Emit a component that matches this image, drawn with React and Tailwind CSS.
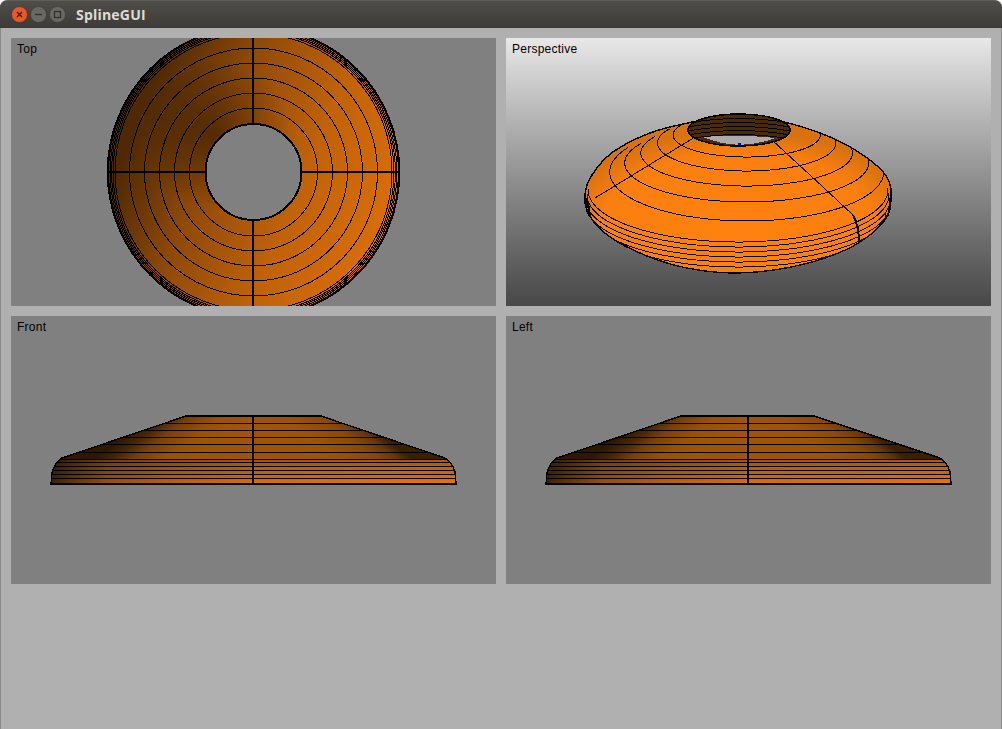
import React from "react";

// Small helper for the wireframe rings: builds an elliptical arc as a polyline
const arc = (cx, cy, rx, ry, from, to) => {
  const pts = [];
  for (let a = from; a <= to; a += 3) {
    const t = (a * Math.PI) / 180;
    pts.push(`${(cx + rx * Math.cos(t)).toFixed(1)},${(cy + ry * Math.sin(t)).toFixed(1)}`);
  }
  return "M" + pts.join(" L");
};

// Closed catmull-rom curve through the silhouette points
const smooth = (p) => {
  const n = p.length;
  let d = `M${p[0][0]} ${p[0][1]}`;
  for (let i = 0; i < n; i++) {
    const [a, b, c, e] = [p[(i - 1 + n) % n], p[i], p[(i + 1) % n], p[(i + 2) % n]];
    d += ` C${b[0] + (c[0] - a[0]) / 6} ${b[1] + (c[1] - a[1]) / 6} ${c[0] - (e[0] - b[0]) / 6} ${c[1] - (e[1] - b[1]) / 6} ${c[0]} ${c[1]}`;
  }
  return d + " Z";
};

const Panel = ({ label, className = "bg-[#808080]", children }) => (
  <div className={`relative w-[485px] h-[268px] overflow-hidden ${className}`}>
    {children}
    <span className="absolute left-[6px] top-[4px] text-[12px] leading-[15px] tracking-[0.25px] text-black font-['Liberation_Sans',sans-serif]">
      {label}
    </span>
  </div>
);

const TopView = () => (
  <svg viewBox="11 38 485 268" width="485" height="268" className="block" shapeRendering="crispEdges">
    <defs>
      <linearGradient id="topFill" gradientUnits="userSpaceOnUse" x1="130" y1="140" x2="368" y2="238">
        <stop offset="0" stopColor="#4f2905" />
        <stop offset="0.32" stopColor="#8f4a08" />
        <stop offset="0.68" stopColor="#c06208" />
        <stop offset="1" stopColor="#d66c0a" />
      </linearGradient>
      <radialGradient id="topDark" gradientUnits="userSpaceOnUse" cx="215" cy="135" r="75">
        <stop offset="0" stopColor="#000" stopOpacity="0.4" />
        <stop offset="1" stopColor="#000" stopOpacity="0" />
      </radialGradient>
    </defs>
    <circle cx="253.5" cy="172" r="146" fill="url(#topFill)" stroke="#000" strokeWidth="1.5" />
    <circle cx="215" cy="135" r="75" fill="url(#topDark)" />
    {[64, 79, 94, 109, 124, 138.5, 140.5, 142, 143.5, 145].map((r) => (
      <circle key={r} cx="253.5" cy="172" r={r} fill="none" stroke="#000" strokeWidth="1" />
    ))}
    <rect x="108" y="171" width="292" height="2" fill="#000" />
    <rect x="252" y="38" width="2" height="268" fill="#000" />
    <circle cx="253.5" cy="172" r="48" fill="#808080" stroke="#000" strokeWidth="2" />
  </svg>
);

const BODY = smooth([
  [688, 123],
  [650, 133],
  [613, 152],
  [592, 175],
  [585, 195],
  [589, 215],
  [610, 237],
  [647, 256],
  [687, 268],
  [733, 273],
  [780, 269],
  [825, 258],
  [860, 242],
  [885, 220],
  [891, 200],
  [887, 177],
  [863, 155],
  [830, 137],
  [788, 123],
  [739, 114],
]);

const PerspectiveView = () => (
  <svg viewBox="506 38 485 268" width="485" height="268" className="block" shapeRendering="crispEdges">
    <defs>
      <radialGradient id="bodyFill" gradientUnits="userSpaceOnUse" cx="738" cy="222" r="175" gradientTransform="translate(0 105) scale(1 0.55)">
        <stop offset="0" stopColor="#ff8210" />
        <stop offset="0.78" stopColor="#fb7f0f" />
        <stop offset="1" stopColor="#d8720f" />
      </radialGradient>
      <clipPath id="bodyClip">
        <path d={BODY} />
      </clipPath>
      <clipPath id="holeClip">
        <ellipse cx="739" cy="130" rx="51" ry="16" />
      </clipPath>
    </defs>
    <path d={BODY} fill="url(#bodyFill)" />
    <g clipPath="url(#bodyClip)" fill="none" stroke="#000" strokeWidth="1">
      {[
        [135, 73.7, 22],
        [143, 89.3, 28],
        [153, 105.8, 33],
        [163, 122, 39],
        [172, 137, 49],
      ].map(([cy, rx, ry]) => (
        <path key={cy} d={arc(746.7, cy, rx, ry, -30, 210)} />
      ))}
      {[
        [190, 150],
        [195, 151],
        [200, 152],
        [205, 152],
        [210, 151],
        [215, 148],
      ].map(([cy, rx]) => (
        <path key={cy} d={arc(738, cy, rx, 52, -2, 182)} />
      ))}
      <path d="M695 137 L595 198" />
      <path d="M772 140 L823 187 L853 215" />
      <path d="M853 215 Q859 226 859 242" strokeWidth="2" />
      <path d="M587 198 Q589 208 590 216" strokeWidth="2" />
    </g>
    <path d={BODY} fill="none" stroke="#000" strokeWidth="1.4" />
    <ellipse cx="739" cy="130" rx="51" ry="16" fill="#4a2a08" stroke="#000" strokeWidth="1.5" />
    <g clipPath="url(#holeClip)" fill="none" stroke="#000" strokeWidth="1">
      {[119, 123, 127, 131, 135].map((y) => (
        <path key={y} d={`M688 ${y + 4} Q739 ${y - 5} 790 ${y + 4}`} />
      ))}
    </g>
    <path d="M703 137 Q739 134 775 138 Q739 152 703 137 Z" fill="#ababab" />
    <path d="M738 143h3v2h-3z" fill="#0000e0" />
  </svg>
);

// Front and left views are the same profile, only shifted
const ProfileView = ({ id, originX, right }) => {
  const shape = `M186 416 L${right} 416 L445 458 Q452 462 455 472 L456 483 L456 484 L51 484 L52 473 Q55 462 62 458 Z`;
  return (
    <svg viewBox={`${originX} 316 485 268`} width="485" height="268" className="block" shapeRendering="crispEdges">
      <defs>
        <linearGradient id={`${id}UpperL`} gradientUnits="userSpaceOnUse" x1="124" y1="437" x2="160" y2="485">
          <stop offset="0" stopColor="#2e1803" />
          <stop offset="0.2" stopColor="#4a2805" />
          <stop offset="0.4" stopColor="#7a4008" />
          <stop offset="0.7" stopColor="#9a5008" />
          <stop offset="1" stopColor="#a0530a" />
        </linearGradient>
        <linearGradient id={`${id}UpperR`} gradientUnits="userSpaceOnUse" x1="383" y1="437" x2="347" y2="485">
          <stop offset="0" stopColor="#3a1f04" />
          <stop offset="0.15" stopColor="#6a3806" />
          <stop offset="0.35" stopColor="#8a4808" />
          <stop offset="0.7" stopColor="#9c520a" />
          <stop offset="1" stopColor="#a0530a" />
        </linearGradient>
        <linearGradient id={`${id}Lower`} gradientUnits="userSpaceOnUse" x1="51" y1="0" x2="456" y2="0">
          <stop offset="0" stopColor="#3e2105" />
          <stop offset="0.06" stopColor="#6a3806" />
          <stop offset="0.14" stopColor="#9a5008" />
          <stop offset="0.31" stopColor="#c06208" />
          <stop offset="0.5" stopColor="#da6e0a" />
          <stop offset="1" stopColor="#e8740a" />
        </linearGradient>
        <linearGradient id={`${id}Shade`} gradientUnits="userSpaceOnUse" x1="0" y1="459" x2="0" y2="484">
          <stop offset="0" stopColor="#000" stopOpacity="0.25" />
          <stop offset="1" stopColor="#000" stopOpacity="0" />
        </linearGradient>
        <clipPath id={`${id}Clip`}>
          <path d={shape} />
        </clipPath>
      </defs>
      <g transform={`translate(${originX - 11} 0)`}>
        <g clipPath={`url(#${id}Clip)`}>
          <rect x="40" y="410" width="213" height="49" fill={`url(#${id}UpperL)`} />
          <rect x="253" y="410" width="217" height="49" fill={`url(#${id}UpperR)`} />
          <rect x="40" y="459" width="430" height="26" fill={`url(#${id}Lower)`} />
          <rect x="40" y="459" width="430" height="26" fill={`url(#${id}Shade)`} />
          {[423, 430, 437, 444, 452, 459, 462, 466, 470, 474, 478].map((y) => (
            <rect key={y} x="40" y={y} width="430" height="1" fill="#000" />
          ))}
          <rect x="252" y="410" width="2" height="80" fill="#000" />
        </g>
        <path d={shape} fill="none" stroke="#000" strokeWidth="1.4" />
        <rect x="51" y="483" width="405" height="2" fill="#000" />
      </g>
    </svg>
  );
};

const TitleBar = () => (
  <div className="flex items-center h-[28px] rounded-t-[7px] bg-gradient-to-b from-[#504e49] to-[#3c3b37] border-t border-[#5f5d58]">
    <div className="flex items-center pl-[11px] gap-[2px]">
      <svg width="17" height="17" viewBox="0 0 17 17" className="block">
        <circle cx="8.5" cy="8.5" r="8" fill="#e9572a" stroke="#3a2a22" strokeWidth="0.6" />
        <path d="M6 6L11 11M11 6L6 11" stroke="#4a1a08" strokeWidth="1.3" />
      </svg>
      <svg width="17" height="17" viewBox="0 0 17 17" className="block">
        <circle cx="8.5" cy="8.5" r="8" fill="#6a6863" stroke="#383733" strokeWidth="0.6" />
        <path d="M5 8.5H12" stroke="#2f2e2b" strokeWidth="1.3" />
      </svg>
      <svg width="17" height="17" viewBox="0 0 17 17" className="block">
        <circle cx="8.5" cy="8.5" r="8" fill="#6a6863" stroke="#383733" strokeWidth="0.6" />
        <rect x="5.5" y="5.5" width="6" height="6" fill="none" stroke="#2f2e2b" strokeWidth="1.2" />
      </svg>
    </div>
    <span className="ml-[10px] text-[14px] tracking-[0.2px] font-bold text-[#dfdbd2] font-['Open_Sans',sans-serif]">SplineGUI</span>
  </div>
);

const App = () => (
  <div className="w-[1002px] h-[729px] overflow-hidden bg-white">
    <TitleBar />
    <div className="h-[701px] bg-[#b0b0b0] border-x border-[#8a8a8a] pt-[10px] pl-[10px]">
      <div className="grid grid-cols-[485px_485px] gap-[10px]">
        <Panel label="Top">
          <TopView />
        </Panel>
        <Panel label="Perspective" className="bg-gradient-to-b from-[#e8e8e8] to-[#484848]">
          <PerspectiveView />
        </Panel>
        <Panel label="Front">
          <ProfileView id="front" originX={11} right={321} />
        </Panel>
        <Panel label="Left">
          <ProfileView id="left" originX={506} right={319} />
        </Panel>
      </div>
    </div>
  </div>
);

export default App;
